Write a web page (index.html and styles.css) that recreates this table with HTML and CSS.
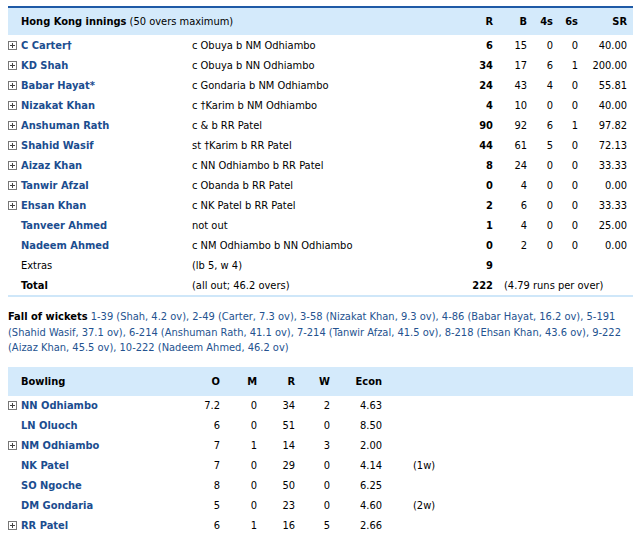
FILE: index.html
```html
<!DOCTYPE html>
<html>
<head>
<meta charset="utf-8">
<link rel="stylesheet" href="styles.css">
</head>
<body>
<div class="page">
  <div class="bat">
    <div class="row head">
      <div class="c-icon"></div>
      <div class="c-title"><b>Hong Kong innings</b> (50 overs maximum)</div>
      <div class="num b">R</div>
      <div class="num b">B</div>
      <div class="num b">4s</div>
      <div class="num b">6s</div>
      <div class="num b">SR</div>
    </div>

    <div class="row">
      <div class="c-icon"><svg class="plus" width="9" height="9" viewBox="0 0 9 9"><rect x="0.5" y="0.5" width="8" height="8" fill="#fff" stroke="#777"/><path d="M2 4.5h5M4.5 2v5" stroke="#444"/></svg></div>
      <div class="name">C Carter†</div><div class="dis">c Obuya b NM Odhiambo</div>
      <div class="num b">6</div><div class="num">15</div><div class="num">0</div><div class="num">0</div><div class="num">40.00</div>
    </div>
    <div class="row">
      <div class="c-icon"><svg class="plus" width="9" height="9" viewBox="0 0 9 9"><rect x="0.5" y="0.5" width="8" height="8" fill="#fff" stroke="#777"/><path d="M2 4.5h5M4.5 2v5" stroke="#444"/></svg></div>
      <div class="name">KD Shah</div><div class="dis">c Obuya b NN Odhiambo</div>
      <div class="num b">34</div><div class="num">17</div><div class="num">6</div><div class="num">1</div><div class="num">200.00</div>
    </div>
    <div class="row">
      <div class="c-icon"><svg class="plus" width="9" height="9" viewBox="0 0 9 9"><rect x="0.5" y="0.5" width="8" height="8" fill="#fff" stroke="#777"/><path d="M2 4.5h5M4.5 2v5" stroke="#444"/></svg></div>
      <div class="name">Babar Hayat*</div><div class="dis">c Gondaria b NM Odhiambo</div>
      <div class="num b">24</div><div class="num">43</div><div class="num">4</div><div class="num">0</div><div class="num">55.81</div>
    </div>
    <div class="row">
      <div class="c-icon"><svg class="plus" width="9" height="9" viewBox="0 0 9 9"><rect x="0.5" y="0.5" width="8" height="8" fill="#fff" stroke="#777"/><path d="M2 4.5h5M4.5 2v5" stroke="#444"/></svg></div>
      <div class="name">Nizakat Khan</div><div class="dis">c †Karim b NM Odhiambo</div>
      <div class="num b">4</div><div class="num">10</div><div class="num">0</div><div class="num">0</div><div class="num">40.00</div>
    </div>
    <div class="row">
      <div class="c-icon"><svg class="plus" width="9" height="9" viewBox="0 0 9 9"><rect x="0.5" y="0.5" width="8" height="8" fill="#fff" stroke="#777"/><path d="M2 4.5h5M4.5 2v5" stroke="#444"/></svg></div>
      <div class="name">Anshuman Rath</div><div class="dis">c &amp; b RR Patel</div>
      <div class="num b">90</div><div class="num">92</div><div class="num">6</div><div class="num">1</div><div class="num">97.82</div>
    </div>
    <div class="row">
      <div class="c-icon"><svg class="plus" width="9" height="9" viewBox="0 0 9 9"><rect x="0.5" y="0.5" width="8" height="8" fill="#fff" stroke="#777"/><path d="M2 4.5h5M4.5 2v5" stroke="#444"/></svg></div>
      <div class="name">Shahid Wasif</div><div class="dis">st †Karim b RR Patel</div>
      <div class="num b">44</div><div class="num">61</div><div class="num">5</div><div class="num">0</div><div class="num">72.13</div>
    </div>
    <div class="row">
      <div class="c-icon"><svg class="plus" width="9" height="9" viewBox="0 0 9 9"><rect x="0.5" y="0.5" width="8" height="8" fill="#fff" stroke="#777"/><path d="M2 4.5h5M4.5 2v5" stroke="#444"/></svg></div>
      <div class="name">Aizaz Khan</div><div class="dis">c NN Odhiambo b RR Patel</div>
      <div class="num b">8</div><div class="num">24</div><div class="num">0</div><div class="num">0</div><div class="num">33.33</div>
    </div>
    <div class="row">
      <div class="c-icon"><svg class="plus" width="9" height="9" viewBox="0 0 9 9"><rect x="0.5" y="0.5" width="8" height="8" fill="#fff" stroke="#777"/><path d="M2 4.5h5M4.5 2v5" stroke="#444"/></svg></div>
      <div class="name">Tanwir Afzal</div><div class="dis">c Obanda b RR Patel</div>
      <div class="num b">0</div><div class="num">4</div><div class="num">0</div><div class="num">0</div><div class="num">0.00</div>
    </div>
    <div class="row">
      <div class="c-icon"><svg class="plus" width="9" height="9" viewBox="0 0 9 9"><rect x="0.5" y="0.5" width="8" height="8" fill="#fff" stroke="#777"/><path d="M2 4.5h5M4.5 2v5" stroke="#444"/></svg></div>
      <div class="name">Ehsan Khan</div><div class="dis">c NK Patel b RR Patel</div>
      <div class="num b">2</div><div class="num">6</div><div class="num">0</div><div class="num">0</div><div class="num">33.33</div>
    </div>
    <div class="row">
      <div class="c-icon"></div>
      <div class="name">Tanveer Ahmed</div><div class="dis">not out</div>
      <div class="num b">1</div><div class="num">4</div><div class="num">0</div><div class="num">0</div><div class="num">25.00</div>
    </div>
    <div class="row">
      <div class="c-icon"></div>
      <div class="name">Nadeem Ahmed</div><div class="dis">c NM Odhiambo b NN Odhiambo</div>
      <div class="num b">0</div><div class="num">2</div><div class="num">0</div><div class="num">0</div><div class="num">0.00</div>
    </div>
    <div class="row">
      <div class="c-icon"></div>
      <div class="plain">Extras</div><div class="dis">(lb 5, w 4)</div>
      <div class="num b">9</div>
    </div>
    <div class="row total">
      <div class="c-icon"></div>
      <div class="plain b">Total</div><div class="dis">(all out; 46.2 overs)</div>
      <div class="num b">222</div>
      <div class="rate">(4.79 runs per over)</div>
    </div>
  </div>

  <p class="fow"><b>Fall of wickets</b> 1-39 (Shah, 4.2 ov), 2-49 (Carter, 7.3 ov), 3-58 (Nizakat Khan, 9.3 ov), 4-86 (Babar Hayat, 16.2 ov), 5-191 (Shahid Wasif, 37.1 ov), 6-214 (Anshuman Rath, 41.1 ov), 7-214 (Tanwir Afzal, 41.5 ov), 8-218 (Ehsan Khan, 43.6 ov), 9-222 (Aizaz Khan, 45.5 ov), 10-222 (Nadeem Ahmed, 46.2 ov)</p>

  <div class="bowl">
    <div class="brow head">
      <div class="c-icon"></div>
      <div class="b">Bowling</div>
      <div class="num b">O</div><div class="num b">M</div><div class="num b">R</div><div class="num b">W</div><div class="num b">Econ</div><div></div>
    </div>
    <div class="brow">
      <div class="c-icon"><svg class="plus" width="9" height="9" viewBox="0 0 9 9"><rect x="0.5" y="0.5" width="8" height="8" fill="#fff" stroke="#777"/><path d="M2 4.5h5M4.5 2v5" stroke="#444"/></svg></div>
      <div class="name">NN Odhiambo</div>
      <div class="num">7.2</div><div class="num">0</div><div class="num">34</div><div class="num">2</div><div class="num">4.63</div><div class="extra"></div>
    </div>
    <div class="brow">
      <div class="c-icon"></div>
      <div class="name">LN Oluoch</div>
      <div class="num">6</div><div class="num">0</div><div class="num">51</div><div class="num">0</div><div class="num">8.50</div><div class="extra"></div>
    </div>
    <div class="brow">
      <div class="c-icon"><svg class="plus" width="9" height="9" viewBox="0 0 9 9"><rect x="0.5" y="0.5" width="8" height="8" fill="#fff" stroke="#777"/><path d="M2 4.5h5M4.5 2v5" stroke="#444"/></svg></div>
      <div class="name">NM Odhiambo</div>
      <div class="num">7</div><div class="num">1</div><div class="num">14</div><div class="num">3</div><div class="num">2.00</div><div class="extra"></div>
    </div>
    <div class="brow">
      <div class="c-icon"></div>
      <div class="name">NK Patel</div>
      <div class="num">7</div><div class="num">0</div><div class="num">29</div><div class="num">0</div><div class="num">4.14</div><div class="extra">(1w)</div>
    </div>
    <div class="brow">
      <div class="c-icon"></div>
      <div class="name">SO Ngoche</div>
      <div class="num">8</div><div class="num">0</div><div class="num">50</div><div class="num">0</div><div class="num">6.25</div><div class="extra"></div>
    </div>
    <div class="brow">
      <div class="c-icon"></div>
      <div class="name">DM Gondaria</div>
      <div class="num">5</div><div class="num">0</div><div class="num">23</div><div class="num">0</div><div class="num">4.60</div><div class="extra">(2w)</div>
    </div>
    <div class="brow">
      <div class="c-icon"><svg class="plus" width="9" height="9" viewBox="0 0 9 9"><rect x="0.5" y="0.5" width="8" height="8" fill="#fff" stroke="#777"/><path d="M2 4.5h5M4.5 2v5" stroke="#444"/></svg></div>
      <div class="name">RR Patel</div>
      <div class="num">6</div><div class="num">1</div><div class="num">16</div><div class="num">5</div><div class="num">2.66</div><div class="extra"></div>
    </div>
  </div>
</div>
</body>
</html>
```

FILE: styles.css
```css
html, body {
  margin: 0;
  padding: 0;
  background: #fff;
}
body {
  font-family: "DejaVu Sans Condensed", "DejaVu Sans", sans-serif;
  font-stretch: condensed;
  font-size: 11px;
  color: #000;
}
.page {
  width: 625px;
  margin-left: 8px;
  padding-top: 6px;
}
.b { font-weight: bold; }

.row {
  display: grid;
  grid-template-columns: 13px 171px 261px 40px 34px 26px 25px 49px;
  height: 20px;
  align-items: center;
  padding-right: 6px;
}
.row.head {
  height: 27px;
  background: #d4eafb;
  border-top: 2px solid #1f5aa6;
}
.row.total {
  border-bottom: 2px solid #cfe7f9;
}
.c-title { grid-column: 2 / 4; }
.c-icon {
  height: 20px;
  display: flex;
  align-items: center;
}
.plus { display: block; }
.name {
  color: #1b4d8f;
  font-weight: bold;
  white-space: nowrap;
}
.dis { white-space: nowrap; }
.num {
  text-align: right;
  white-space: nowrap;
}
.rate {
  grid-column: 5 / 9;
  padding-left: 11px;
  white-space: nowrap;
}

.fow {
  margin: 12px 0 0 0;
  line-height: 15.6px;
  color: #24528f;
}
.fow b { color: #000; }

.bowl {
  margin-top: 11px;
}
.brow {
  display: grid;
  grid-template-columns: 13px 159px 40px 37px 38px 35px 52px 1fr;
  height: 20px;
  align-items: center;
}
.brow.head {
  height: 29px;
  background: #d4eafb;
}
.extra {
  padding-left: 31px;
}
```
